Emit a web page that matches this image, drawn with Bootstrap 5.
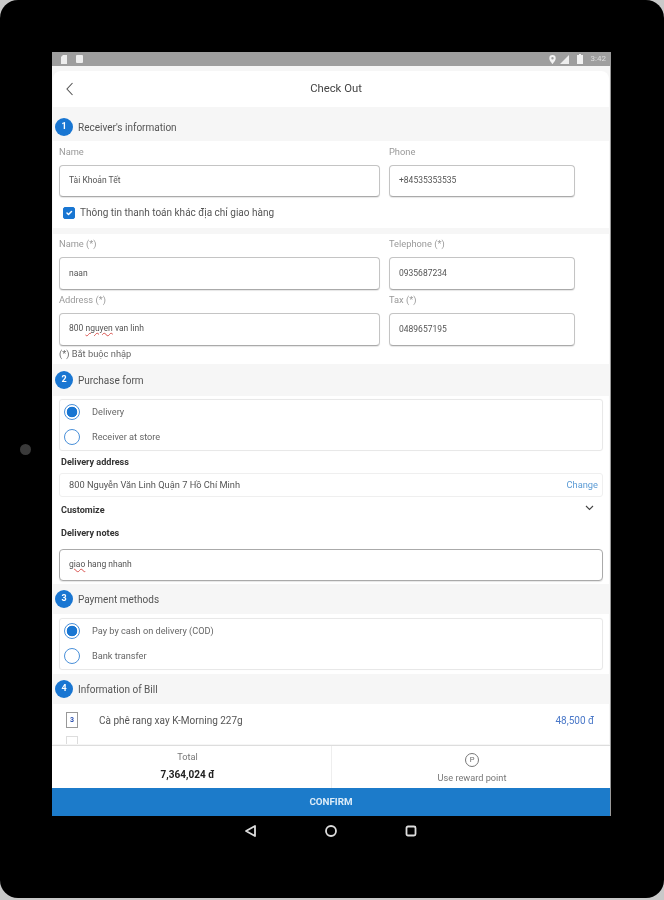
<!DOCTYPE html>
<html lang="vi">
<head>
<meta charset="utf-8">
<title>Check Out</title>
<link rel="stylesheet" href="https://cdn.jsdelivr.net/npm/bootstrap@5.3.0/dist/css/bootstrap.min.css">
<style>
html,body{height:900px;margin:0;overflow:hidden;background:#c9c9c9}
body{font-family:Roboto,"Liberation Sans",sans-serif;font-size:9px;color:#555}
.bezel{width:664px;height:898px;background:#000;border-radius:18px;padding:52px 53px 0 52px;display:flex;align-items:flex-start;}
.screen{width:559px;height:764px;display:flex;flex-direction:column;background:#f6f6f6;border-right:1px solid #9a9a9a;filter:blur(.5px)}
.cam{width:11px;height:11px;border-radius:50%;background:#3a3a3a;left:20px;top:444px}
.status{height:14px;background:#9e9e9e;padding:0 4px 0 8px;flex:none}
.status svg{display:block}
.clock{color:#ddd;font-size:8px;line-height:1}
.head{height:36px;margin:5px 1px 0;background:#fff;border-radius:8px 8px 0 0;flex:none;color:#444;font-size:11.3px;padding:0 0 0 10px;position:relative}
.head svg{position:absolute;left:13px;top:11px}
.scroll{flex:1 1 0;overflow:hidden;min-height:0}
.sect{display:flex;align-items:center;gap:5px;padding-left:3px;color:#555;font-size:10px}
.num{width:18px;height:18px;border-radius:50%;background:#1976d2;color:#fff;font-size:9px;font-weight:700;display:flex;align-items:center;justify-content:center;flex:none}
.s1{height:34px;padding-top:6px}.s2{height:32px}.s3{height:30px}.s4{height:30px}
.pane{background:#fff;margin:0 1px;padding:0 6px}
.p1{height:87px;padding-top:5px}
.p2{height:130px;padding-top:4px;margin-top:6px}
.p3{height:188px;padding-top:3px}
.fgrid{display:grid;grid-template-columns:321px 186px;column-gap:9px}
.lbl{color:#999;font-size:9.300px;line-height:12px;height:17px;display:block;margin-bottom:0}
.form-control.fld{height:32px;font-size:8.500px;color:#555;padding:0 9px 2px;border:1px solid #c4c4c4;border-bottom-color:#aaa;border-radius:4px;box-shadow:0 1px 1px rgba(0,0,0,.1);margin-top:2px;background:#fff}
.fake{display:flex;align-items:center}
.h33{height:33px!important}
.rowgap{margin-top:4px}
.err{text-decoration:underline wavy #d9534f;text-decoration-thickness:1px}
.chk{display:flex;align-items:center;gap:5px;margin:8px 0 0 4px;font-size:10px;color:#555;min-height:0;padding:0}
.chk .form-check-input{width:12px;height:12px;margin:0;float:none;background-color:#1976d2;border-color:#1976d2;border-radius:2px;flex:none}
.req{font-size:9.300px;color:#666;margin-top:2px;line-height:12px}
.rcard{height:52px;border:1px solid #e8e8e8;border-radius:3px;padding:0 0 0 4px;box-shadow:0 0 1px rgba(0,0,0,.05)}
.ritem{display:flex;align-items:center;gap:12px;height:23px;margin-bottom:2px;font-size:9.200px;color:#666}
.radio{width:16px;height:16px;border:1px solid #4a90d9;border-radius:50%;flex:none;margin:0;padding:0;appearance:none;background:#fff}
.radio:checked{background:radial-gradient(circle,#1976d2 0 5px,#fff 5.6px)}
.bold{font-weight:700;font-size:9.100px;color:#333;line-height:12px;margin-left:2px}
.bgap{margin-top:5px}
.addr{height:24px;margin-top:5px;border:1px solid #efefef;border-radius:3px;padding:0 4px 0 9px;font-size:9.250px;color:#555}
.link-chg{color:#5b9bd5;font-size:9.300px;text-decoration:none}
.cust{margin-top:7px;height:12px;padding-right:9px}
.cust svg{margin-top:-4px}
.notes{margin-top:11px}
.noteinput{height:32px!important;margin-top:10px!important;border-color:#aaa!important}
.paypane{height:60px;padding-top:4px}
.prod{height:32px;padding:0 15px 0 13px;font-size:10px;color:#555}
.qty{width:12px;height:16px;border:1px solid #999;color:#2a4fb0;font-size:7px;font-weight:700;display:flex;align-items:center;justify-content:center;margin-right:21px;flex:none}
.price{color:#4a78c8}
.qty2{width:12px;height:8px;border:1px solid #ddd;border-bottom:0;margin-left:13px}
.foot{height:43px;background:#fff;flex:none;border-top:1px solid #ddd}
.foot>div{flex:0 0 50%;text-align:center}
.foot>div+div{border-left:1px solid #eee}
.ftotal{padding:5px 8px 0 0}
.fpoint{padding:7px 0 0 2px}
.tl{font-size:9.200px;color:#777;line-height:12px}
.tot{font-size:10px;font-weight:700;color:#222;margin-top:6px;line-height:12px}
.ptc{width:14px;height:14px;border:1px solid #777;border-radius:50%;font-size:7.500px;line-height:12px;color:#666;margin:0 auto 5px}
.confirm{height:28px;border-radius:0;background:#1c7bca;border:0;color:#dcecf8;font-size:9.800px;font-weight:700;padding:1px 0 0;flex:none}
.navb{left:244px;top:824px;gap:66px}
</style>
</head>
<body>
<div class="bezel position-relative">
  <div class="cam position-absolute"></div>
  <div class="screen">
    <div class="status d-flex align-items-center justify-content-between">
      <div class="d-flex gap-2">
        <svg width="8" height="9" viewBox="0 0 8 9"><path d="M1 2l2-2h4v9H1z" fill="#eee"/></svg>
        <svg width="7" height="8" viewBox="0 0 7 8"><rect width="7" height="8" rx="1" fill="#eee"/></svg>
      </div>
      <div class="d-flex align-items-center gap-1">
        <svg width="7" height="9" viewBox="0 0 7 9"><path d="M3.500 0a3.200 3.200 0 0 0-3.200 3.200C.3 5.600 3.500 9 3.500 9s3.200-3.400 3.200-5.800A3.200 3.200 0 0 0 3.500 0zm0 4.400a1.200 1.200 0 1 1 0-2.400 1.200 1.200 0 0 1 0 2.400z" fill="#f2f2f2"/></svg>
        <svg width="9" height="9" viewBox="0 0 9 9"><path d="M9 0v9H0z" fill="#eee"/></svg>
        <svg width="6" height="10" viewBox="0 0 6 10" class="ms-1"><path d="M2 0h2v1h2v9H0V1h2z" fill="#f2f2f2"/></svg>
        <span class="clock ms-1">3:42</span>
      </div>
    </div>
    <div class="head d-flex align-items-center justify-content-center">
      <svg width="8" height="14" viewBox="0 0 8 14"><path d="M6.500 1L1 7l5.500 6" fill="none" stroke="#555" stroke-width="1.100"/></svg>
      <span>Check Out</span>
    </div>
    <div class="scroll">
      <div class="sect s1"><span class="num">1</span><span>Receiver's information</span></div>
      <div class="pane p1">
        <div class="fgrid">
          <div><label class="lbl">Name</label><input class="form-control fld" value="Tài Khoản Tết"></div>
          <div><label class="lbl">Phone</label><input class="form-control fld" value="+84535353535"></div>
        </div>
        <div class="form-check chk"><input class="form-check-input" type="checkbox" checked><label>Thông tin thanh toán khác địa chỉ giao hàng</label></div>
      </div>
      <div class="pane p2">
        <div class="fgrid">
          <div><label class="lbl">Name (*)</label><input class="form-control fld h33" value="naan"></div>
          <div><label class="lbl">Telephone (*)</label><input class="form-control fld h33" value="0935687234"></div>
          <div class="rowgap"><label class="lbl">Address (*)</label><div class="form-control fld h33 fake"><span>800&nbsp;<span class="err">nguyen</span> van linh</span></div></div>
          <div class="rowgap"><label class="lbl">Tax (*)</label><input class="form-control fld h33" value="0489657195"></div>
        </div>
        <div class="req">(*) Bắt buộc nhập</div>
      </div>
      <div class="sect s2"><span class="num">2</span><span>Purchase form</span></div>
      <div class="pane p3">
        <div class="rcard">
          <div class="ritem"><input class="radio" type="radio" name="a" checked><span>Delivery</span></div>
          <div class="ritem"><input class="radio" type="radio" name="a"><span>Receiver at store</span></div>
        </div>
        <div class="bold bgap">Delivery address</div>
        <div class="addr d-flex align-items-center justify-content-between"><span>800 Nguyễn Văn Linh Quận 7 Hồ Chí Minh</span><a class="link-chg" href="#">Change</a></div>
        <div class="cust bold d-flex align-items-center justify-content-between"><span>Customize</span>
          <svg width="9" height="6" viewBox="0 0 9 6"><path d="M1 1l3.500 3.500L8 1" fill="none" stroke="#444" stroke-width="1.100"/></svg></div>
        <div class="bold notes">Delivery notes</div>
        <div class="form-control fld noteinput fake"><span><span class="err">giao</span> hang nhanh</span></div>
      </div>
      <div class="sect s3"><span class="num">3</span><span>Payment methods</span></div>
      <div class="pane paypane">
        <div class="rcard">
          <div class="ritem"><input class="radio" type="radio" name="b" checked><span>Pay by cash on delivery (COD)</span></div>
          <div class="ritem"><input class="radio" type="radio" name="b"><span>Bank transfer</span></div>
        </div>
      </div>
      <div class="sect s4"><span class="num">4</span><span>Information of Bill</span></div>
      <div class="pane px-0">
        <div class="prod d-flex align-items-center justify-content-between">
          <div class="d-flex align-items-center"><span class="qty">3</span><span>Cà phê rang xay K-Morning 227g</span></div>
          <span class="price">48,500 đ</span>
        </div>
        <div class="qty2"></div>
      </div>
    </div>
    <div class="foot d-flex">
      <div class="ftotal"><div class="tl">Total</div><div class="tot">7,364,024 đ</div></div>
      <div class="fpoint"><div class="ptc">P</div><div class="tl">Use reward point</div></div>
    </div>
    <button class="btn confirm" type="button">CONFIRM</button>
  </div>
  <div class="navb position-absolute d-flex align-items-center">
    <svg width="14" height="14" viewBox="0 0 14 14"><path d="M11 2v10L2 7z" fill="none" stroke="#ddd" stroke-width="1.800" stroke-linejoin="round"/></svg>
    <svg width="14" height="14" viewBox="0 0 14 14"><circle cx="7" cy="7" r="5" fill="none" stroke="#ddd" stroke-width="1.800"/></svg>
    <svg width="14" height="14" viewBox="0 0 14 14"><rect x="2.500" y="2.500" width="9" height="9" rx="1.500" fill="none" stroke="#ddd" stroke-width="1.800"/></svg>
  </div>
</div>
</body>
</html>
